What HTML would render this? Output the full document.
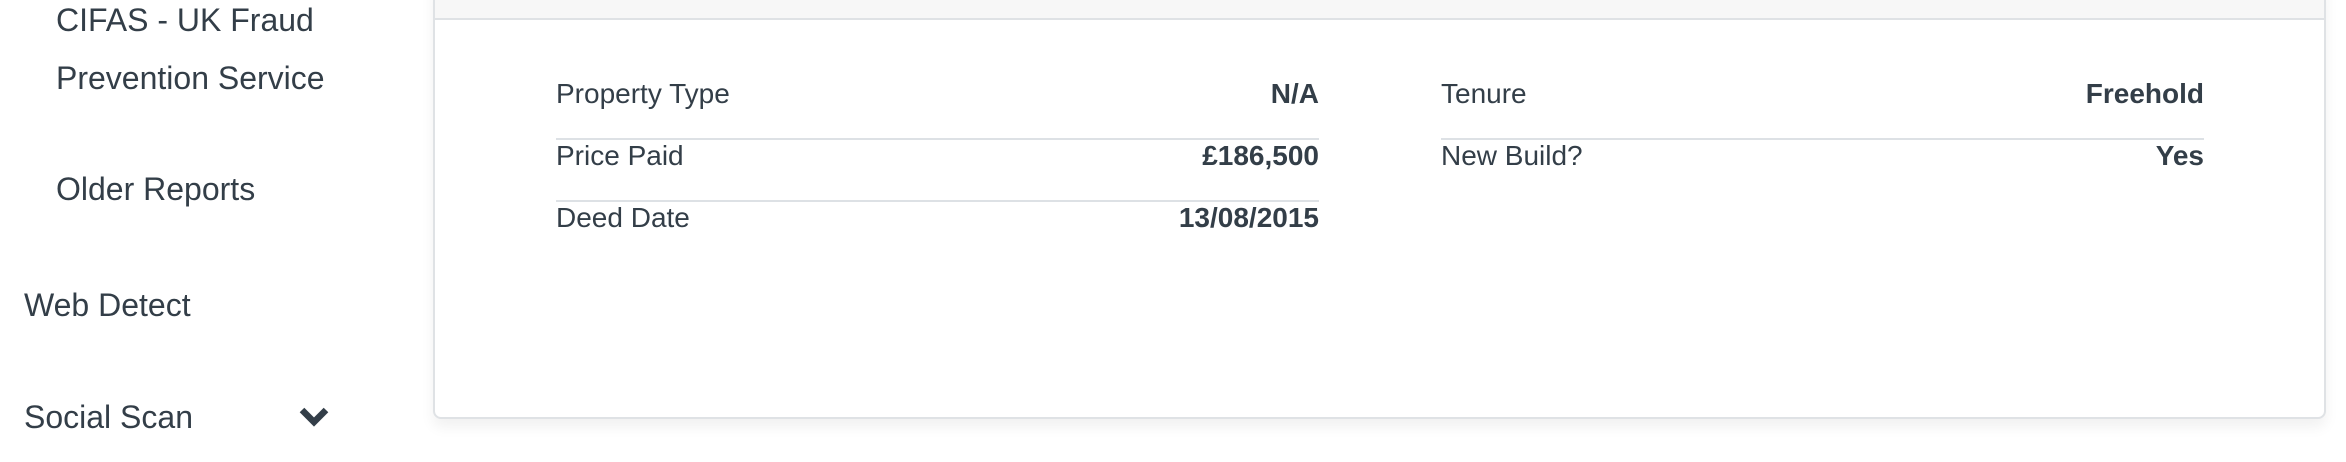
<!DOCTYPE html>
<html><head><style>
html,body{margin:0;padding:0;width:2346px;height:462px;overflow:hidden;background:#fff;font-family:"Liberation Sans",sans-serif;color:#333e48;}
.s{position:absolute;font-size:32px;line-height:1;white-space:nowrap}
.card{position:absolute;left:433px;top:-20px;width:1893px;height:439px;border:2px solid #dfe2e5;border-radius:8px;box-sizing:border-box;background:#fff;box-shadow:0 8px 14px rgba(0,0,0,0.06);overflow:hidden}
.hd{position:absolute;left:0;top:0;right:0;height:36px;background:#f7f7f7;border-bottom:2px solid #dfe2e5}
.row{position:absolute;width:763px;height:62px;font-size:28px;line-height:1}
.row .l{position:absolute;left:0;top:0}
.row .v{position:absolute;right:0;top:0;font-weight:bold}
.ln{position:absolute;width:763px;height:2px;background:#dde1e5}
</style></head><body>
<div class="s" style="left:56px;top:4px">CIFAS - UK Fraud</div>
<div class="s" style="left:56px;top:62px">Prevention Service</div>
<div class="s" style="left:56px;top:173px">Older Reports</div>
<div class="s" style="left:24px;top:289px">Web Detect</div>
<div class="s" style="left:24px;top:401px">Social Scan</div>
<svg style="position:absolute;left:299px;top:406px" width="30" height="22" viewBox="0 0 30 22"><path d="M3 4 L15 16 L27 4" fill="none" stroke="#333e48" stroke-width="6.5"/></svg>
<div class="card"><div class="hd"></div></div>
<div class="row" style="left:556px;top:80px"><span class="l">Property Type</span><span class="v">N/A</span></div>
<div class="ln" style="left:556px;top:138px"></div>
<div class="row" style="left:556px;top:142px"><span class="l">Price Paid</span><span class="v">£186,500</span></div>
<div class="ln" style="left:556px;top:200px"></div>
<div class="row" style="left:556px;top:204px"><span class="l">Deed Date</span><span class="v">13/08/2015</span></div>
<div class="row" style="left:1441px;top:80px"><span class="l">Tenure</span><span class="v">Freehold</span></div>
<div class="ln" style="left:1441px;top:138px"></div>
<div class="row" style="left:1441px;top:142px"><span class="l">New Build?</span><span class="v">Yes</span></div>
</body></html>
